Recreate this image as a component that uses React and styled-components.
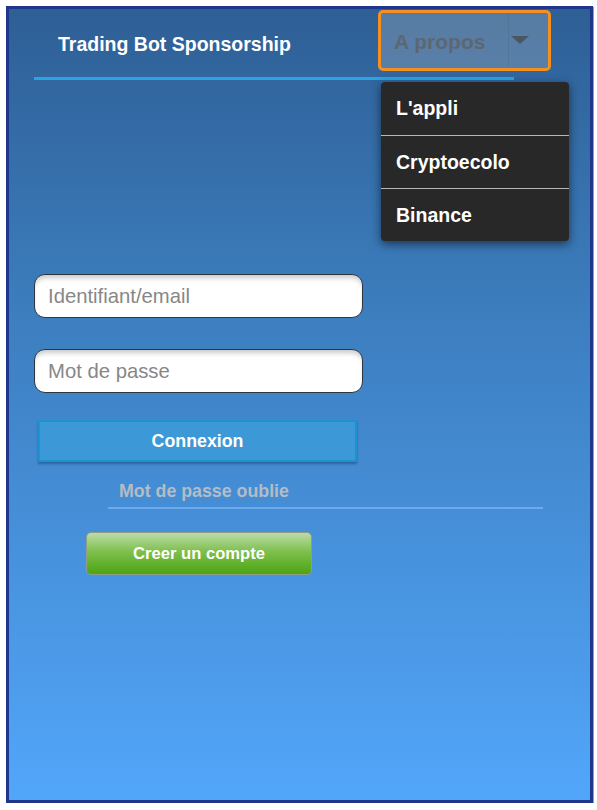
import styled, { createGlobalStyle } from "styled-components"

const GlobalStyle = createGlobalStyle`
  body {
    margin: 0;
    font-family: "Liberation Sans", Arial, sans-serif;
    background: #ffffff;
  }
`

const Frame = styled.div`
  box-sizing: border-box;
  margin: 6px 0 0 6px;
  width: 587px;
  height: 797px;
  border: 3px solid #1f368a;
  background: linear-gradient(180deg, #2e5f95 0%, #3d7fc0 40%, #52a6fa 100%);
  box-shadow: 1px 1px 0 #8aa0c8;
`

const Header = styled.header`
  position: relative;
  padding: 0 0 0 25px;
`

const TitleBar = styled.div`
  width: 480px;
  height: 71px;
  padding-left: 24px;
  box-sizing: border-box;
  display: flex;
  align-items: center;
  border-bottom: 3px solid #2aa4e2;
  padding-top: 2px;

  h1 {
    margin: 0;
    font-size: 19.5px;
    font-weight: bold;
    color: #ffffff;
  }
`

const DropdownWrapper = styled.div`
  position: absolute;
  top: 1px;
  left: 369px;
`

const DropdownButton = styled.button`
  display: flex;
  align-items: stretch;
  width: 173px;
  height: 61px;
  padding: 0;
  box-sizing: border-box;
  border: 3px solid #f58f1f;
  border-radius: 5px;
  background: rgba(150, 168, 186, 0.4);
  font-family: inherit;
  cursor: pointer;

  span {
    flex: 1;
    display: flex;
    align-items: center;
    padding-left: 13px;
    padding-top: 2px;
    font-size: 21px;
    font-weight: bold;
    color: #5d6771;
    text-align: left;
  }
`

const Caret = styled.i`
  width: 40px;
  display: flex;
  align-items: center;
  padding-left: 2px;
  box-sizing: border-box;
  border-left: 1px solid rgba(70, 100, 130, 0.3);

  &::after {
    content: "";
    border-left: 9px solid transparent;
    border-right: 9px solid transparent;
    border-top: 8px solid #4a5663;
    margin-top: -2px;
  }
`

const Menu = styled.ul`
  list-style: none;
  margin: 11px 0 0 3px;
  padding: 0;
  width: 188px;
  background: #282828;
  border-radius: 4px;
  box-shadow: 0 3px 10px rgba(0, 0, 0, 0.55);
  overflow: hidden;
`

const MenuItem = styled.li`
  height: 53px;
  display: flex;
  align-items: center;
  padding-left: 15px;
  font-size: 19.5px;
  font-weight: bold;
  color: #ffffff;
  border-top: ${(p) => (p.first ? "none" : "1px solid #b8b8b8")};
  box-sizing: border-box;
`

const Form = styled.form`
  display: flex;
  flex-direction: column;
  padding: 194px 0 0 25px;
`

const TextInput = styled.input`
  box-sizing: border-box;
  width: 329px;
  height: 44px;
  margin-bottom: 31px;
  padding: 0 13px;
  border: 1px solid #2d3540;
  border-radius: 11px;
  background: #ffffff;
  box-shadow: inset 0 5px 5px -2px #c9c9c9;
  font-family: inherit;
  font-size: 20.3px;
  color: #333;

  &::placeholder {
    color: #878787;
  }
`

const ConnectButton = styled.button`
  box-sizing: border-box;
  width: 319px;
  height: 42px;
  margin: -4px 0 0 4px;
  border: 2px solid #1c93d0;
  background: #3c98d6;
  box-shadow: 0 2px 2px rgba(20, 50, 100, 0.45);
  font-family: inherit;
  font-size: 17.8px;
  font-weight: bold;
  color: #ffffff;
`

const ForgotLink = styled.a`
  display: block;
  width: 435px;
  box-sizing: border-box;
  margin: 19px 0 0 74px;
  padding: 0 0 5px 11px;
  border-bottom: 2px solid #6aaaee;
  font-size: 17.8px;
  font-weight: bold;
  color: #b4bcc5;
  text-decoration: none;
`

const CreateButton = styled.button`
  box-sizing: border-box;
  width: 226px;
  height: 43px;
  margin: 23px 0 0 52px;
  border: 1px solid #8f9c88;
  border-radius: 5px;
  background: linear-gradient(180deg, #bcdca8 0%, #7fbf4e 45%, #4ba512 100%);
  font-family: inherit;
  font-size: 16.6px;
  font-weight: bold;
  color: #ffffff;
`

const App = () => {
  return (
    <>
      <GlobalStyle />
      <Frame>
        <Header>
          <TitleBar>
            <h1>Trading Bot Sponsorship</h1>
          </TitleBar>
          <DropdownWrapper>
            <DropdownButton type="button">
              <span>A propos</span>
              <Caret />
            </DropdownButton>
            <Menu>
              <MenuItem first>L'appli</MenuItem>
              <MenuItem>Cryptoecolo</MenuItem>
              <MenuItem>Binance</MenuItem>
            </Menu>
          </DropdownWrapper>
        </Header>
        <Form onSubmit={(e) => e.preventDefault()}>
          <TextInput type="text" placeholder="Identifiant/email" />
          <TextInput type="password" placeholder="Mot de passe" />
          <ConnectButton type="submit">Connexion</ConnectButton>
          <ForgotLink href="#">Mot de passe oublie</ForgotLink>
          <CreateButton type="button">Creer un compte</CreateButton>
        </Form>
      </Frame>
    </>
  )
}

export default App
